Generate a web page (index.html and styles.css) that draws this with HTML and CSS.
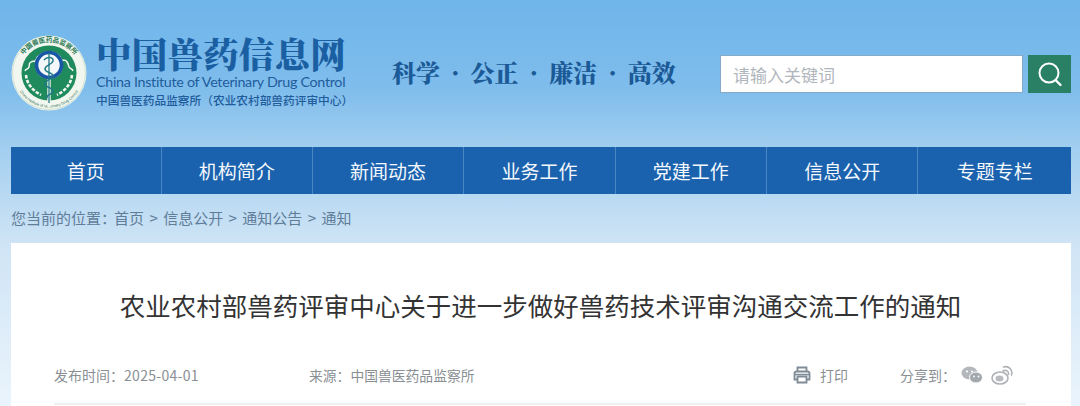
FILE: index.html
```html
<!DOCTYPE html>
<html lang="zh-CN">
<head>
<meta charset="utf-8">
<title>中国兽药信息网</title>
<link rel="stylesheet" href="styles.css">
</head>
<body>
<div class="page">
  <header class="header">
    <svg class="logo" viewBox="0 0 76 76" width="76" height="76" aria-hidden="true">
      <defs>
        <path id="arcTop" d="M7 38a31 31 0 0 1 62 0"/>
        <path id="arcBottom" d="M3.500 38a34.500 34.500 0 0 0 69 0"/>
      </defs>
      <circle cx="38" cy="38" r="37.500" fill="#f1f6ee"/>
      <circle cx="38" cy="38" r="36.500" fill="none" stroke="#c9ddc8" stroke-width=".8"/>
      <circle cx="38" cy="38" r="27.500" fill="#1f8a5b"/>
      <text class="seal-top"><textPath href="#arcTop" startOffset="50%" text-anchor="middle">中国兽医药品监察所</textPath></text>
      <text class="seal-bottom"><textPath href="#arcBottom" startOffset="50%" text-anchor="middle">China Institute of Veterinary Drug Control</textPath></text>
      <path d="M14 36c1-3 3-1 4-4s-1-3 2-5 3 1 5-2 0-3 3-4 3 2 5 0 2-2 5-2 3 2 5 2 2-2 5 0 0 3 3 4 3-1 5 2 1 3 2 5 3 1 4 4" fill="none" stroke="#f1f6ee" stroke-width="1.500"/>
      <path d="M15 40c1 9 6 15 15 20M61 40c-1 9-6 15-15 20" fill="none" stroke="#f1f6ee" stroke-width="2.600" stroke-dasharray="3.500 1.500"/>
      <path d="M38 44v28" stroke="#f1f6ee" stroke-width="3.400"/>
      <circle cx="38" cy="30" r="14" fill="#f4f8f8"/>
      <circle cx="38" cy="30" r="12.500" fill="none" stroke="#1a56a6" stroke-width="3.600"/>
      <path d="M38 18v50" stroke="#1f7a86" stroke-width="1.300"/>
      <path d="M33 25c3-4 10-3 9 1s-8 4-8 8 8 3 8 7c0 3-8 4-8 8s8 3 8 7-7 3-6 7" fill="none" stroke="#1f7a86" stroke-width="1.500"/>
    </svg>
    <div class="brand">
      <div class="brand-cn">中国兽药信息网</div>
      <div class="brand-en">China Institute of Veterinary Drug Control</div>
      <div class="brand-sub">中国兽医药品监察所（农业农村部兽药评审中心）</div>
    </div>
    <div class="motto">科学 · 公正 · 廉洁 · 高效</div>
    <form class="search">
      <input class="search-input" type="text" placeholder="请输入关键词">
      <button class="search-btn" type="button" aria-label="搜索">
        <svg viewBox="0 0 28 28" width="28" height="28" aria-hidden="true">
          <circle cx="13" cy="13" r="9.500" fill="none" stroke="#fff" stroke-width="2"/>
          <path d="M19.500 20l5 5" stroke="#fff" stroke-width="2.400" stroke-linecap="round"/>
        </svg>
      </button>
    </form>
  </header>
  <nav class="nav">
    <a class="nav-item">首页</a>
    <a class="nav-item">机构简介</a>
    <a class="nav-item">新闻动态</a>
    <a class="nav-item">业务工作</a>
    <a class="nav-item">党建工作</a>
    <a class="nav-item">信息公开</a>
    <a class="nav-item">专题专栏</a>
  </nav>
  <div class="crumbs">您当前的位置：<span class="crumb-first">首页</span><span class="sep">&gt;</span>信息公开<span class="sep">&gt;</span>通知公告<span class="sep">&gt;</span>通知</div>
  <main class="card">
    <h1 class="title">农业农村部兽药评审中心关于进一步做好兽药技术评审沟通交流工作的通知</h1>
    <div class="meta">
      <span class="meta-date">发布时间：<span class="date-value">2025-04-01</span></span>
      <span class="meta-source">来源：中国兽医药品监察所</span>
      <span class="meta-print">
        <svg viewBox="0 0 20 20" width="20" height="20" aria-hidden="true">
          <path d="M5.500 6V2.500h9V6" fill="none" stroke="#7f8b96" stroke-width="1.800"/>
          <path d="M5 14.500H2.500V8.500q0-2 2-2h11q2 0 2 2v6H15" fill="none" stroke="#7f8b96" stroke-width="1.800"/>
          <path d="M5.500 11.500h9v6h-9z" fill="none" stroke="#7f8b96" stroke-width="1.800"/>
          <path d="M3 9.500h14" stroke="#7f8b96" stroke-width="1.500"/>
        </svg>
        打印
      </span>
      <span class="meta-share"><span class="share-label">分享到：</span>
        <svg class="share-icon" viewBox="0 0 22 18" width="22" height="18" aria-hidden="true">
          <ellipse cx="8.500" cy="7" rx="8" ry="6.500" fill="#b4b8bc"/>
          <ellipse cx="15" cy="11.500" rx="6.500" ry="5.500" fill="#a3a8ad" stroke="#fff" stroke-width="1"/>
          <circle cx="6" cy="5.500" r="1.100" fill="#fff"/>
          <circle cx="11" cy="5.500" r="1.100" fill="#fff"/>
          <circle cx="13" cy="10.500" r=".9" fill="#fff"/>
          <circle cx="17.500" cy="10.500" r=".9" fill="#fff"/>
        </svg>
        <svg class="share-icon" viewBox="0 0 22 20" width="22" height="20" aria-hidden="true">
          <ellipse cx="9" cy="13" rx="8" ry="6" fill="none" stroke="#aeb2b6" stroke-width="1.600"/>
          <ellipse cx="8.500" cy="13.500" rx="4" ry="3" fill="#b8bcc0"/>
          <path d="M12 6c3-1.500 6 0 5.500 3.500M12.500 2c5.500-1.500 9.500 3 8 8" fill="none" stroke="#aeb2b6" stroke-width="1.600" stroke-linecap="round"/>
        </svg>
      </span>
    </div>
    <div class="rule"></div>
  </main>
</div>
</body>
</html>
```
FILE: styles.css
```css
* { box-sizing: border-box; }
html, body { margin: 0; padding: 0; height: 406px; overflow: hidden; }
body {
  font-family: "Noto Sans CJK SC", "Liberation Sans", sans-serif;
  background: linear-gradient(180deg, #6fb5ea 0%, #7fbdec 22%, #a3cff0 37%, #cfe4f5 60%, #eaf4fc 100%);
}
.page { padding: 0 9px 0 11px; }
.header { height: 147px; display: flex; align-items: flex-start; padding-top: 35px; }
.logo { flex: none; }
.brand { width: 262px; margin-left: 9px; color: #1f5c9c; flex: none; }
.brand-cn { font-family: "Noto Serif CJK SC", "Noto Sans CJK SC", serif; font-size: 35.500px; font-weight: 900; line-height: 36px; letter-spacing: .2px; white-space: nowrap; color: #1b5fa3; }
.brand-en { font-family: "Lato", "Liberation Sans", sans-serif; font-size: 14.300px; letter-spacing: -.3px; line-height: 18px; margin-top: 2px; white-space: nowrap; }
.brand-sub { font-size: 11.700px; line-height: 16px; margin-top: 1px; white-space: nowrap; font-weight: 500; }
.motto { font-family: "Noto Serif CJK SC", "Noto Sans CJK SC", serif; font-size: 24px; font-weight: 900; word-spacing: 5.300px; color: #1b5a96; margin-left: 34px; margin-top: 20px; line-height: 34px; white-space: nowrap; width: 328px; flex: none; }
.search { display: flex; gap: 5px; margin-top: 20px; flex: none; }
.search-input { width: 303px; height: 38px; border: 1px solid #86a9c8; background: #fff; padding: 0 12px; font: 17px "Noto Sans CJK SC", sans-serif; outline: none; border-radius: 0; }
.search-input::placeholder { color: #b0b6bd; }
.search-btn { width: 43px; height: 38px; border: 0; padding: 0; background: #2a8065; display: flex; align-items: center; justify-content: center; }
.nav { display: grid; grid-template-columns: 149.500px repeat(5, 151.400px) 1fr; height: 47px; background: #1a62ae; }
.nav-item { display: flex; align-items: center; justify-content: center; color: #f4f8fc; font-size: 19px; border-left: 1px solid #4a86c2; }
.nav-item:first-child { border-left: 0; }
.crumbs { height: 49px; padding-top: 14px; font-size: 15px; line-height: 20px; color: #5f7d99; white-space: nowrap; }
.crumb-first { margin-left: -2px; }
.sep { margin: 0 5.400px; }
.card { background: #fff; height: 163px; padding: 0 45px 0 43px; }
.title { margin: 0 -1px 0 0; padding-top: 44px; font-size: 25.500px; line-height: 36px; font-weight: 400; color: #333; text-align: center; white-space: nowrap; }
.meta { display: flex; align-items: center; height: 24px; margin-top: 40px; font-size: 14px; color: #8a8f94; white-space: nowrap; }
.meta-date { width: 255px; }
.date-value { letter-spacing: .3px; }
.meta-source { width: 483px; font-size: 13.800px; }
.meta-print { width: 108px; display: flex; align-items: center; gap: 8px; }
.meta-share { display: flex; align-items: center; }
.share-label { margin-right: 5px; }
.share-icon { margin-right: 8px; }
.rule { height: 2px; background: #eceef0; margin-top: 16px; }
.seal-top { font-size: 6.600px; font-family: "Noto Sans CJK SC", sans-serif; fill: #2c7a58; font-weight: 700; }
.seal-bottom { font-size: 3.800px; font-family: "Liberation Sans", sans-serif; fill: #2c6e55; }
```
